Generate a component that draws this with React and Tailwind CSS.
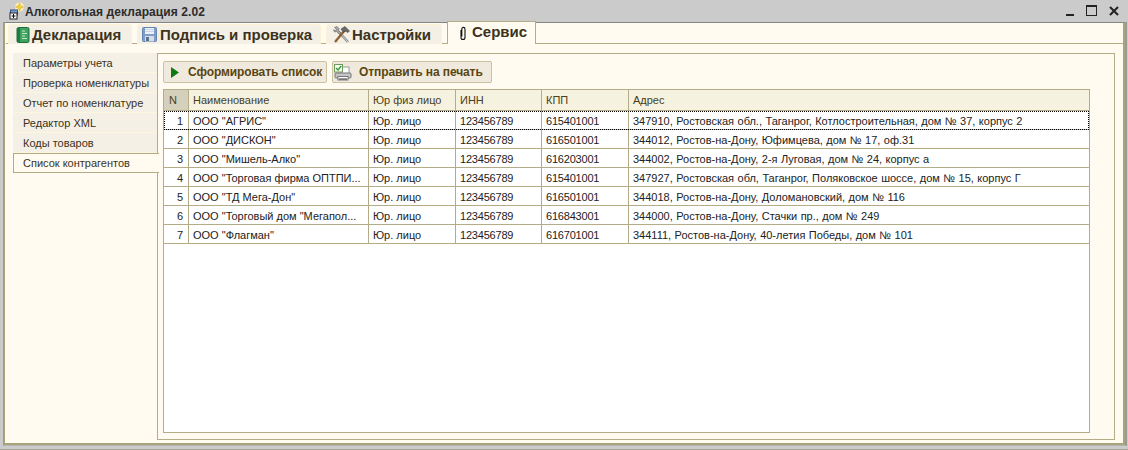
const rows = [
  [1, 'ООО "АГРИС"', '615401001', '347910, Ростовская обл., Таганрог, Котлостроительная, дом № 37, корпус 2'],
  [2, 'ООО "ДИСКОН"', '616501001', '344012, Ростов-на-Дону, Юфимцева, дом № 17, оф.31'],
  [3, 'ООО "Мишель-Алко"', '616203001', '344002, Ростов-на-Дону, 2-я Луговая, дом № 24, корпус а'],
  [4, 'ООО "Торговая фирма ОПТПИ...', '615401001', '347927, Ростовская обл, Таганрог, Поляковское шоссе, дом № 15, корпус Г'],
  [5, 'ООО "ТД Мега-Дон"', '616501001', '344018, Ростов-на-Дону, Доломановский, дом № 116'],
  [6, 'ООО "Торговый дом "Мегапол...', '616843001', '344000, Ростов-на-Дону, Стачки пр., дом № 249'],
  [7, 'ООО "Флагман"', '616701001', '344111, Ростов-на-Дону, 40-летия Победы, дом № 101'],
];
const side = ['Параметры учета', 'Проверка номенклатуры', 'Отчет по номенклатуре', 'Редактор XML', 'Коды товаров'];
const cols = 'grid grid-cols-[25px_180px_87px_86px_87px_1fr]';
const line = 'border-r border-[#b3ac86]';

function AppIcon() {
  return (
    <svg width="20" height="18" viewBox="0 0 20 18" className="shrink-0">
      <circle cx="14.5" cy="5" r="4.5" fill="#fbeeb0" />
      <path d="M14.5 1l1.1 2.9L18.5 5l-2.9 1.1L14.5 9l-1.1-2.9L10.5 5l2.9-1.1z" fill="#f3cf3a" stroke="#c9a52a" strokeWidth=".5" />
      <rect x="5.5" y="8" width="7" height="5" fill="#7fa3d0" stroke="#2f4f80" />
      <rect x="5" y="11" width="7" height="6" fill="#fff" stroke="#222" />
      <path d="M8.5 12v4M6.5 14h4" stroke="#111" />
    </svg>
  );
}
function BookIcon() {
  return (
    <svg width="14" height="16" viewBox="0 0 14 16" className="shrink-0">
      <rect x="1" y="0.5" width="12" height="15" rx="1.5" fill="#3fa260" stroke="#1f6e3c" />
      <rect x="1" y="1" width="3" height="14" fill="#1f7a40" />
      <path d="M6 4h3M6 6.5h5M6 9h3M6 11.5h5" stroke="#bfeccb" strokeWidth="1" />
    </svg>
  );
}
function FloppyIcon() {
  return (
    <svg width="15" height="15" viewBox="0 0 15 15" className="shrink-0">
      <rect x="0.5" y="0.5" width="14" height="14" rx="1" fill="#7f9ec8" stroke="#6484ae" />
      <rect x="3" y="1" width="9" height="6" fill="#eef2f8" />
      <path d="M3 2.5h9M3 4.5h9" stroke="#c9d3e2" />
      <rect x="3" y="9" width="9" height="5.5" fill="#d8dde6" />
      <rect x="4" y="10" width="3" height="4" fill="#5c7190" />
    </svg>
  );
}
function ToolsIcon() {
  return (
    <svg width="17" height="17" viewBox="0 0 17 17" className="shrink-0">
      <path d="M5 5l10 11" stroke="#8a8a8a" strokeWidth="2.6" />
      <path d="M5 5l10 11" stroke="#d8d8d8" strokeWidth="1" />
      <path d="M2 16L12 4" stroke="#8f6330" strokeWidth="2.4" />
      <path d="M8 3l4-2.5 4.5 4.5L15 6.5l-3-1.5-1.5 1.5z" fill="#6a6a6a" stroke="#333" strokeWidth=".5" />
      <path d="M1.5 1.5L4 .5l2 2-.5 2L8 7 6.5 8.5l-2.8-3L1.5 6 .5 3.8l2 .7 1-1z" fill="#a5a5a5" stroke="#555" strokeWidth=".5" />
    </svg>
  );
}
function ClipIcon() {
  return (
    <svg width="8" height="15" viewBox="0 0 8 15" className="shrink-0">
      <path d="M2 4v7.5a2 2 0 0 0 4 0V3a1.6 1.6 0 0 0-3.2 0v7.5" fill="none" stroke="#111" strokeWidth="1.1" />
    </svg>
  );
}
function PrintIcon() {
  return (
    <svg width="18" height="17" viewBox="0 0 18 17" className="shrink-0">
      <rect x="7" y="3" width="8" height="7" fill="#fff" stroke="#9a9a9a" />
      <rect x="0.5" y="0.5" width="8" height="7.5" fill="#f6fbf2" stroke="#6f9a5c" />
      <path d="M2 4l2 2 3.2-4" fill="none" stroke="#2e9a3a" strokeWidth="1.3" />
      <rect x="1" y="9" width="16" height="5" rx="1" fill="#c4c4c4" stroke="#777" />
      <rect x="4" y="12.5" width="10" height="3.5" fill="#fff" stroke="#777" />
      <path d="M5 15h8" stroke="#333" />
    </svg>
  );
}

function TopTab({ icon, label, className }) {
  return (
    <div className={`flex h-5 items-center rounded-t-[3px] bg-[#f5f0e6] border-t border-x border-[#fdf3d4] ${className}`}>
      {icon}
      <span className="text-[15px] font-bold leading-5 tracking-[-0.02px] text-[#3c3220]">{label}</span>
    </div>
  );
}
function Btn({ icon, label, className }) {
  return (
    <div className={`flex h-[22px] items-center rounded-[2px] border border-[#c9c3a4] bg-[#efeadd] text-[12px] font-bold tracking-[-0.1px] text-[#5a4510] ${className}`}>
      {icon}
      <span>{label}</span>
    </div>
  );
}

export default function App() {
  return (
    <div className="flex h-[450px] w-[1128px] flex-col overflow-hidden bg-[#cbcbcb] font-['Liberation_Sans',sans-serif]">
      <div className="flex h-[22px] shrink-0 items-center pl-[5px] pr-[8px]">
        <AppIcon />
        <span className="pt-[1px] text-[12px] font-bold tracking-[0.08px] text-[#2c2c2c]">Алкогольная декларация 2.02</span>
        <div className="ml-auto flex items-center text-[#222]">
          <svg width="11" height="11" viewBox="0 0 11 11" className="mr-[9px]"><rect x="0" y="8" width="8" height="2" fill="#222" /></svg>
          <svg width="12" height="12" viewBox="0 0 12 12" className="mr-[11px]"><rect x="0.5" y="0.5" width="10" height="10" fill="none" stroke="#222" /><rect x="0" y="0" width="11" height="2" fill="#222" /></svg>
          <svg width="10" height="10" viewBox="0 0 10 10" className="mr-[1px]"><path d="M1 1l8 8M9 1L1 9" stroke="#222" strokeWidth="2" /></svg>
        </div>
      </div>
      <div className="flex flex-1 flex-col border-b border-[#a5a692]">
        <div className="mb-[3px] ml-[3px] mr-[1px] flex flex-1 flex-col border-b border-l border-r-2 border-[#9a9a9a] border-b-[#b5b5b5]">
          <div className="flex flex-1 flex-col border-x border-b-2 border-t border-[#a8a47c] border-t-[#858585] border-r-2 bg-[#fffbf0] pl-[1px]">
            <div className="relative flex h-[21px] shrink-0 items-end gap-[5px] border-b border-[#b3ac86] pl-[2px]">
              <TopTab className="-mb-px w-[124px] gap-[2px] pl-[7px]" icon={<BookIcon />} label="Декларация" />
              <TopTab className="-mb-px w-[184px] gap-[3px] pl-[4px]" icon={<FloppyIcon />} label="Подпись и проверка" />
              <TopTab className="-mb-px w-[116px] gap-[2px] pl-[6px]" icon={<ToolsIcon />} label="Настройки" />
              <div className="relative z-10 -mb-px -mt-[2px] flex h-[23px] w-[89px] items-center gap-[5px] border-x border-t border-[#b3ac86] bg-[#fffbf0] pl-[11px] text-[15px] font-bold text-[#3c3220]">
                <ClipIcon />
                <span className="-mt-[1px]">Сервис</span>
              </div>
            </div>
            <div className="flex flex-1 pb-[3px] pl-[7px] pr-[8px] pt-[9px]">
              <div className="w-[145px] shrink-0 text-[11px] text-[#3c3220]">
                {side.map((s) => (
                  <div key={s} className="flex h-5 items-center border-b border-r border-[#b3ac86] border-b-[#fdf6df] bg-[#f5f0e6] pl-[10px] pt-[2px]">{s}</div>
                ))}
                <div className="relative z-10 -mr-px flex h-[20px] items-center border-y border-l border-[#b3ac86] bg-[#fffbf0] pl-[9px]">Список контрагентов</div>
              </div>
              <div className="-ml-[1px] flex flex-1 flex-col border border-[#b3ac86] pb-[6px] pl-[5px] pr-[24px] pt-[7px]">
                <div className="flex gap-[5px]">
                  <Btn className="w-[164px] gap-[9px] pl-[7px]" icon={<svg width="8" height="11" viewBox="0 0 8 11"><path d="M0 0l8 5.5L0 11z" fill="#0f7a13" /></svg>} label="Сформировать список" />
                  <Btn className="w-[160px] gap-[7px] pl-[1px]" icon={<PrintIcon />} label="Отправить на печать" />
                </div>
                <div className="mt-[6px] flex flex-1 flex-col border border-[#b3ac86] bg-white text-[11px] text-[#222]">
                  <div className={`${cols} h-[21px] items-stretch border-b border-[#b3ac86] bg-[#f5f2e0] text-[#4a4020]`}>
                    <div className={`${line} flex items-center bg-[#d4d0bc] pl-[5px]`}>N</div>
                    {['Наименование', 'Юр физ лицо', 'ИНН', 'КПП'].map((h) => (
                      <div key={h} className={`${line} flex items-center pl-[4px]`}>{h}</div>
                    ))}
                    <div className="flex items-center pl-[4px]">Адрес</div>
                  </div>
                  {rows.map((r) => (
                    <div key={r[0]} className={`${cols} h-[19px] border-b border-[#b3ac86] ${r[0] === 1 ? 'outline-1 -outline-offset-1 outline-dotted outline-black' : ''}`}>
                      <div className={`${line} flex items-center justify-end pr-[5px] pt-[2px]`}>{r[0]}</div>
                      <div className={`${line} flex items-center pl-[4px] pt-[2px]`}>{r[1]}</div>
                      <div className={`${line} flex items-center pl-[4px] pt-[2px]`}>Юр. лицо</div>
                      <div className={`${line} flex items-center pl-[4px] pt-[2px] tracking-[-0.2px]`}>123456789</div>
                      <div className={`${line} flex items-center pl-[4px] pt-[2px] tracking-[-0.2px]`}>{r[2]}</div>
                      <div className="flex items-center whitespace-nowrap pl-[4px] pt-[2px] [word-spacing:0.4px]">{r[3]}</div>
                    </div>
                  ))}
                </div>
              </div>
            </div>
          </div>
        </div>
      </div>
    </div>
  );
}
